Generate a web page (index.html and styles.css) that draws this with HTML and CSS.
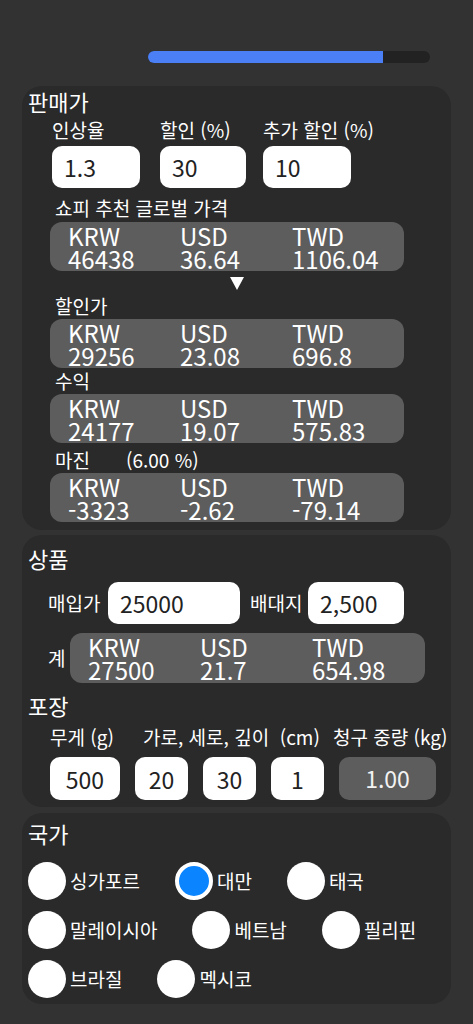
FILE: index.html
```html
<!DOCTYPE html>
<html lang="ko">
<head>
<meta charset="utf-8">
<title>판매가 계산기</title>
<link rel="stylesheet" href="styles.css">
</head>
<body>
<div class="app">
  <div class="progress"><div class="progress-fill" style="width:83.3%"></div></div>

  <section class="panel panel-price">
    <h2 class="title">판매가</h2>
    <div class="field-row">
      <div class="field f1"><span class="label">인상율</span><input class="input w88" value="1.3"></div>
      <div class="field f2"><span class="label">할인 (%)</span><input class="input w86" value="30"></div>
      <div class="field f3"><span class="label">추가 할인 (%)</span><input class="input w88" value="10"></div>
    </div>

    <div class="sub-label first">쇼피 추천 글로벌 가격</div>
    <div class="box">
      <div class="cell"><div>KRW</div><div>46438</div></div>
      <div class="cell"><div>USD</div><div>36.64</div></div>
      <div class="cell"><div>TWD</div><div>1106.04</div></div>
    </div>
    <div class="arrow"></div>

    <div class="sub-label s-discount">할인가</div>
    <div class="box">
      <div class="cell"><div>KRW</div><div>29256</div></div>
      <div class="cell"><div>USD</div><div>23.08</div></div>
      <div class="cell"><div>TWD</div><div>696.8</div></div>
    </div>

    <div class="sub-label s-profit">수익</div>
    <div class="box">
      <div class="cell"><div>KRW</div><div>24177</div></div>
      <div class="cell"><div>USD</div><div>19.07</div></div>
      <div class="cell"><div>TWD</div><div>575.83</div></div>
    </div>

    <div class="sub-label s-margin">마진<span class="pct">(6.00 %)</span></div>
    <div class="box">
      <div class="cell"><div>KRW</div><div>-3323</div></div>
      <div class="cell"><div>USD</div><div>-2.62</div></div>
      <div class="cell"><div>TWD</div><div>-79.14</div></div>
    </div>
  </section>

  <section class="panel panel-product">
    <h2 class="title">상품</h2>
    <div class="buy-row">
      <span class="label lbl-buy">매입가</span>
      <input class="input w132" value="25000">
      <span class="label lbl-ship">배대지</span>
      <input class="input w96" value="2,500">
    </div>
    <div class="sum-row">
      <span class="label lbl-sum">계</span>
      <div class="box box-sum">
        <div class="cell"><div>KRW</div><div>27500</div></div>
        <div class="cell"><div>USD</div><div>21.7</div></div>
        <div class="cell"><div>TWD</div><div>654.98</div></div>
      </div>
    </div>

    <h2 class="title title-pack">포장</h2>
    <div class="pack-labels">
      <span class="label">무게 (g)</span>
      <span class="label pre">가로, 세로, 깊이  (cm)</span>
      <span class="label">청구 중량 (kg)</span>
    </div>
    <div class="pack-inputs">
      <input class="input center w70" value="500">
      <input class="input center w53" value="20">
      <input class="input center w53" value="30">
      <input class="input center w53" value="1">
      <div class="input center readonly w97">1.00</div>
    </div>
  </section>

  <section class="panel panel-country">
    <h2 class="title">국가</h2>
    <div class="radios">
      <div class="radio-item"><span class="radio"></span><span class="radio-label">싱가포르</span></div>
      <div class="radio-item"><span class="radio checked"></span><span class="radio-label">대만</span></div>
      <div class="radio-item"><span class="radio"></span><span class="radio-label">태국</span></div>
      <div class="radio-item"><span class="radio"></span><span class="radio-label">말레이시아</span></div>
      <div class="radio-item"><span class="radio"></span><span class="radio-label">베트남</span></div>
      <div class="radio-item"><span class="radio"></span><span class="radio-label">필리핀</span></div>
      <div class="radio-item"><span class="radio"></span><span class="radio-label">브라질</span></div>
      <div class="radio-item"><span class="radio"></span><span class="radio-label">멕시코</span></div>
    </div>
  </section>
</div>
</body>
</html>
```

FILE: styles.css
```css
* { box-sizing: border-box; }

body {
  margin: 0;
  background: #323232;
  color: #ffffff;
  font-family: "Noto Sans CJK KR", "Noto Sans", sans-serif;
}

.app {
  padding-top: 51px;
  padding-bottom: 20px;
}

.progress {
  margin-left: 148px;
  width: 282px;
  height: 12px;
  border-radius: 6px;
  background: #222222;
  overflow: hidden;
}

.progress-fill {
  height: 100%;
  background: #4a7ff5;
}

.panel {
  margin: 0 22px;
  background: #2a2a2a;
  border-radius: 20px;
}

.panel-price { margin-top: 23px; padding: 2px 0 8px; }
.panel-product { margin-top: 5px; padding: 10px 0 7px; }
.panel-country { margin-top: 6px; padding: 7px 0 6px; }

.title {
  margin: 0 0 0 6px;
  font-size: 22px;
  line-height: 26px;
  font-weight: 400;
}

.label {
  font-size: 19px;
  line-height: 22px;
  white-space: nowrap;
}

.pre { white-space: pre; }

.field-row {
  display: flex;
  margin: 5px 0 0 30px;
}

.field {
  display: flex;
  flex-direction: column;
  gap: 5px;
}

.f1 { width: 108px; }
.f2 { width: 103px; }

.input {
  display: block;
  height: 42px;
  border: none;
  border-radius: 10px;
  background: #ffffff;
  color: #222222;
  font-family: inherit;
  font-size: 23px;
  padding: 0 12px;
  outline: none;
}

.input.center {
  text-align: center;
  padding: 0;
  height: 43px;
}

.readonly {
  background: #5d5d5d;
  color: #f2f2f2;
  line-height: 43px;
}

.w53 { width: 53px; }
.w70 { width: 70px; }
.w86 { width: 86px; }
.w88 { width: 88px; }
.w96 { width: 96px; }
.w97 { width: 97px; }
.w132 { width: 132px; }

.sub-label {
  margin-left: 33px;
  font-size: 19px;
  line-height: 22px;
  margin-bottom: 2px;
}

.sub-label.first { margin-top: 9px; margin-bottom: 3px; }
.sub-label.s-discount { margin-top: 5px; }
.sub-label.s-profit { margin-top: 2px; }
.sub-label.s-margin { margin-top: 6px; }

.pct { margin-left: 36px; }

.box {
  display: grid;
  grid-template-columns: 112px 112px 112px;
  margin-left: 28px;
  width: 354px;
  height: 49px;
  padding: 2px 0 0 18px;
  background: #5d5d5d;
  border-radius: 12px;
  font-size: 24px;
  line-height: 23px;
}

.cell { white-space: nowrap; }

.arrow {
  width: 0;
  height: 0;
  margin: 6px auto 0;
  border-left: 7px solid transparent;
  border-right: 7px solid transparent;
  border-top: 13px solid #ffffff;
}

.buy-row {
  display: flex;
  align-items: center;
  margin: 11px 0 0 26px;
}

.lbl-buy { width: 60px; }
.lbl-ship { width: 58px; margin-left: 10px; }

.sum-row {
  display: flex;
  align-items: center;
  margin: 9px 0 0 26px;
}

.lbl-sum { width: 22px; }

.box.box-sum {
  margin-left: 0;
  width: 355px;
  height: 50px;
}

.title-pack { margin-top: 9px; }

.pack-labels {
  display: grid;
  grid-template-columns: 93px 190px auto;
  margin: 8px 0 0 28px;
}

.pack-inputs {
  display: flex;
  gap: 15px;
  margin: 9px 0 0 28px;
}

.radios {
  display: flex;
  flex-wrap: wrap;
  column-gap: 35px;
  row-gap: 11px;
  margin: 16px 0 0 6px;
}

.radio-item {
  display: flex;
  align-items: center;
}

.radio {
  width: 38px;
  height: 38px;
  border-radius: 50%;
  background: #ffffff;
  margin-right: 4px;
}

.radio.checked {
  background: #0a84ff;
  border: 4px solid #ffffff;
}

.radio-label {
  font-size: 19px;
  line-height: 24px;
}
```
